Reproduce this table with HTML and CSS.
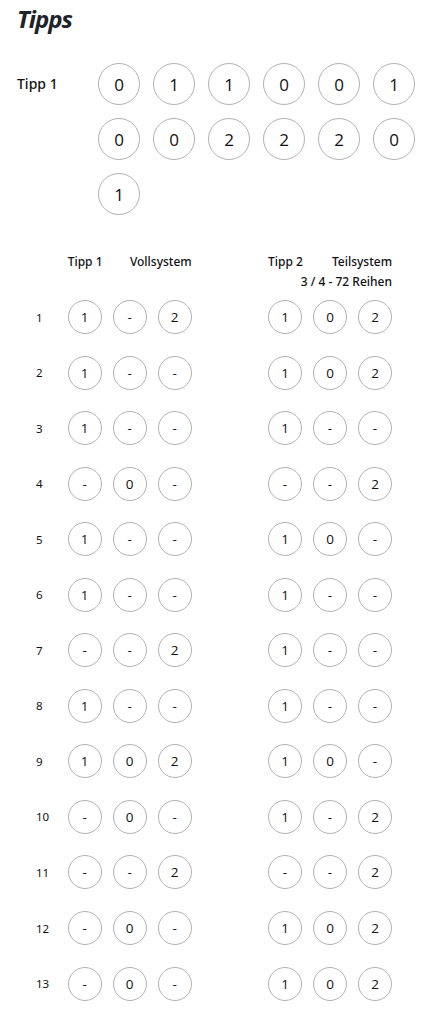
FILE: index.html
```html
<!DOCTYPE html>
<html lang="de">
<head>
<meta charset="utf-8">
<title>Tipps</title>
<link rel="stylesheet" href="styles.css">
</head>
<body>
<div class="page">
  <h1 class="title">Tipps</h1>

  <section class="tipp-top">
    <div class="tipp-label">Tipp 1</div>
    <div class="balls">
      <span class="ball">0</span><span class="ball">1</span><span class="ball">1</span><span class="ball">0</span><span class="ball">0</span><span class="ball">1</span>
      <span class="ball">0</span><span class="ball">0</span><span class="ball">2</span><span class="ball">2</span><span class="ball">2</span><span class="ball">0</span>
      <span class="ball">1</span>
    </div>
  </section>

  <section class="system">
    <div class="row head">
      <span></span>
      <div class="hgroup">
        <div class="hline"><span>Tipp 1</span><span>Vollsystem</span></div>
      </div>
      <span></span>
      <div class="hgroup">
        <div class="hline"><span>Tipp 2</span><span>Teilsystem</span></div>
        <div class="hline right"><span>3 / 4 - 72 Reihen</span></div>
      </div>
    </div>

    <div class="rows">
      <div class="row"><span class="num">1</span><div class="group"><span class="pick">1</span><span class="pick">-</span><span class="pick">2</span></div><span></span><div class="group"><span class="pick">1</span><span class="pick">0</span><span class="pick">2</span></div></div>
      <div class="row"><span class="num">2</span><div class="group"><span class="pick">1</span><span class="pick">-</span><span class="pick">-</span></div><span></span><div class="group"><span class="pick">1</span><span class="pick">0</span><span class="pick">2</span></div></div>
      <div class="row"><span class="num">3</span><div class="group"><span class="pick">1</span><span class="pick">-</span><span class="pick">-</span></div><span></span><div class="group"><span class="pick">1</span><span class="pick">-</span><span class="pick">-</span></div></div>
      <div class="row"><span class="num">4</span><div class="group"><span class="pick">-</span><span class="pick">0</span><span class="pick">-</span></div><span></span><div class="group"><span class="pick">-</span><span class="pick">-</span><span class="pick">2</span></div></div>
      <div class="row"><span class="num">5</span><div class="group"><span class="pick">1</span><span class="pick">-</span><span class="pick">-</span></div><span></span><div class="group"><span class="pick">1</span><span class="pick">0</span><span class="pick">-</span></div></div>
      <div class="row"><span class="num">6</span><div class="group"><span class="pick">1</span><span class="pick">-</span><span class="pick">-</span></div><span></span><div class="group"><span class="pick">1</span><span class="pick">-</span><span class="pick">-</span></div></div>
      <div class="row"><span class="num">7</span><div class="group"><span class="pick">-</span><span class="pick">-</span><span class="pick">2</span></div><span></span><div class="group"><span class="pick">1</span><span class="pick">-</span><span class="pick">-</span></div></div>
      <div class="row"><span class="num">8</span><div class="group"><span class="pick">1</span><span class="pick">-</span><span class="pick">-</span></div><span></span><div class="group"><span class="pick">1</span><span class="pick">-</span><span class="pick">-</span></div></div>
      <div class="row"><span class="num">9</span><div class="group"><span class="pick">1</span><span class="pick">0</span><span class="pick">2</span></div><span></span><div class="group"><span class="pick">1</span><span class="pick">0</span><span class="pick">-</span></div></div>
      <div class="row"><span class="num">10</span><div class="group"><span class="pick">-</span><span class="pick">0</span><span class="pick">-</span></div><span></span><div class="group"><span class="pick">1</span><span class="pick">-</span><span class="pick">2</span></div></div>
      <div class="row"><span class="num">11</span><div class="group"><span class="pick">-</span><span class="pick">-</span><span class="pick">2</span></div><span></span><div class="group"><span class="pick">-</span><span class="pick">-</span><span class="pick">2</span></div></div>
      <div class="row"><span class="num">12</span><div class="group"><span class="pick">-</span><span class="pick">0</span><span class="pick">-</span></div><span></span><div class="group"><span class="pick">1</span><span class="pick">0</span><span class="pick">2</span></div></div>
      <div class="row"><span class="num">13</span><div class="group"><span class="pick">-</span><span class="pick">0</span><span class="pick">-</span></div><span></span><div class="group"><span class="pick">1</span><span class="pick">0</span><span class="pick">2</span></div></div>
    </div>
  </section>
</div>
</body>
</html>
```

FILE: styles.css
```css
* { box-sizing: border-box; }

html, body {
  margin: 0;
  padding: 0;
  background: #ffffff;
}

body {
  font-family: "Noto Sans", "Open Sans", sans-serif;
  color: #111111;
}

.page {
  padding: 4px 0 0 0;
}

.title {
  margin: 0;
  padding-left: 17px;
  font-family: "Noto Sans", sans-serif;
  font-size: 24px;
  font-weight: 700;
  font-style: italic;
  letter-spacing: -1px;
  line-height: 30px;
  color: #1d2329;
}

.tipp-top {
  display: flex;
  align-items: flex-start;
  padding: 0 17px;
  margin-top: 29px;
}

.tipp-label {
  width: 81px;
  flex: none;
  font-size: 14px;
  font-weight: 500;
  line-height: 42px;
}

.balls {
  flex: 1;
  display: flex;
  flex-wrap: wrap;
  gap: 13px;
}

.ball {
  width: 42px;
  height: 42px;
  border: 1px solid #b2b2b2;
  border-radius: 50%;
  display: flex;
  align-items: center;
  justify-content: center;
  font-family: "Open Sans", sans-serif;
  font-size: 17px;
  color: #111;
}

.system {
  margin-top: 37px;
  padding: 0 42px 0 36px;
}

.row {
  display: grid;
  grid-template-columns: 31.7px 124px 1fr 124px;
  align-items: center;
  height: 34px;
}

.row.head {
  height: auto;
  align-items: start;
  margin-bottom: 9px;
}

.rows {
  display: flex;
  flex-direction: column;
  gap: 21.55px;
}

.hgroup {
  font-size: 12px;
  font-weight: 500;
  line-height: 19.5px;
}

.hline {
  display: flex;
  justify-content: space-between;
}

.hline.right {
  justify-content: flex-end;
}

.num {
  font-size: 11.5px;
  font-weight: 400;
}

.group {
  display: flex;
  gap: 11px;
}

.pick {
  width: 34px;
  height: 34px;
  border: 1px solid #b2b2b2;
  border-radius: 50%;
  display: flex;
  align-items: center;
  justify-content: center;
  font-family: "Open Sans", sans-serif;
  font-size: 13.5px;
  color: #111;
}
```
